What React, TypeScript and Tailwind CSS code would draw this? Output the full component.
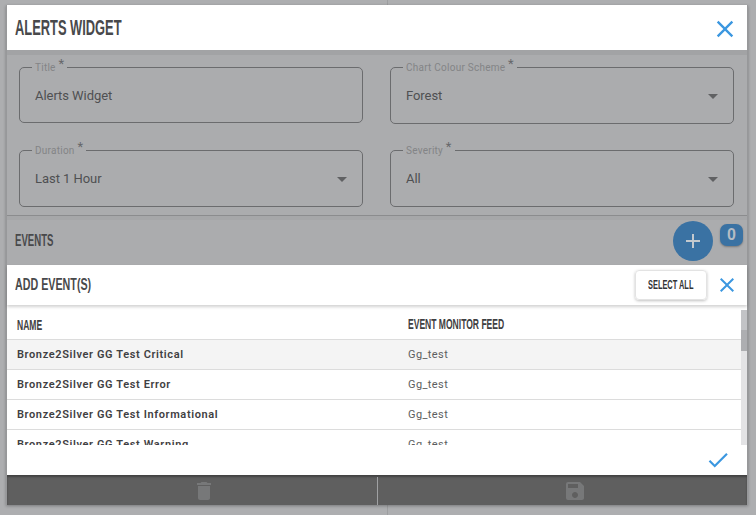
/**
 * Alerts widget dialog with the "add events" panel open
 */
import React from 'react';
import { MdArrowDropDown, MdClose, MdDelete, MdSave, MdCheck } from 'react-icons/md';

const EVENTS = [
    'Bronze2Silver GG Test Critical',
    'Bronze2Silver GG Test Error',
    'Bronze2Silver GG Test Informational',
    'Bronze2Silver GG Test Warning',
];

// no Oswald here, so squeeze a narrow face sideways
const Heading = ({ children, className }: { children: React.ReactNode; className: string }) => (
    <span className={`inline-block origin-left whitespace-nowrap font-['Liberation_Sans_Narrow','Liberation_Sans',sans-serif] ${className}`}>
        {children}
    </span>
);

const Field = ({ label, value, select, className }: { label: string; value: string; select?: boolean; className: string }) => (
    <fieldset className={`rounded-[5px] border border-[#6b6c6e] pl-[15px] pr-[8px] ${className}`}>
        <legend className="ml-[-3px] h-[12px] px-[3px] text-[10px] leading-[14px] tracking-[0.25px] text-[#838486]">
            {label} <span className="relative top-[-3px] text-[13px] leading-[12px] text-[#66676a]">*</span>
        </legend>
        <div className="mt-[13px] flex h-[20px] items-center justify-between text-[13px] leading-[20px] tracking-[-0.05px] text-[#4f5052]">
            <span>{value}</span>
            {select && <MdArrowDropDown size={24} className="text-[#606163]" />}
        </div>
    </fieldset>
);

export default function App() {
    return (
        <div className="relative h-[515px] w-[756px] overflow-hidden bg-[#adaeb0] font-['Roboto',sans-serif]">
            {/* page behind the dialog */}
            <div className="h-full w-[388px] border-r border-[#9d9ea0]" />

            <div className="absolute left-[6px] top-[5px] flex h-[500px] w-[742px] flex-col border-x border-[#97989a] shadow-[0_1px_3px_rgba(0,0,0,0.3)]">
                <div className="flex h-[45px] shrink-0 items-center justify-between bg-white pl-[8px] pr-[8px]">
                    <Heading className="scale-x-[0.585] text-[22px] font-bold text-[#48494b]">ALERTS WIDGET</Heading>
                    <MdClose size={28} className="mt-[2px] text-[#3b97e0]" />
                </div>

                <div className="h-[166px] shrink-0 border-b border-[#8b8c8e] bg-[#abacae] shadow-[inset_0_5px_0_#a2a3a5]">
                    <div className="grid grid-cols-[344px_344px] gap-x-[27px] gap-y-[20px] pl-[12px] pt-[11px]">
                        <Field label="Title" value="Alerts Widget" className="h-[62px]" />
                        <Field label="Chart Colour Scheme" value="Forest" select className="h-[63px]" />
                        <Field label="Duration" value="Last 1 Hour" select className="h-[63px]" />
                        <Field label="Severity" value="All" select className="h-[63px]" />
                    </div>
                </div>

                <div className="flex h-[49px] shrink-0 items-center justify-between bg-[#abacae] pl-[8px] pr-[4px] shadow-[inset_0_4px_0_#a6a7a9]">
                    <Heading className="mt-[1px] scale-x-[0.6] text-[16px] font-bold text-[#48494b]">EVENTS</Heading>
                    <div className="flex items-start gap-[7px]">
                        <div className="flex h-[40px] w-[40px] items-center justify-center rounded-full bg-[#3a72a3]">
                            <svg width="16" height="16" viewBox="0 0 16 16" className="text-[#c3c9ce]">
                                <path d="M8 1v14M1 8h14" stroke="currentColor" strokeWidth="2" />
                            </svg>
                        </div>
                        <div className="mt-[3px] flex h-[22px] w-[23px] items-center justify-center rounded-[7px] bg-[#3a72a3] shadow-[0_1px_2px_rgba(0,0,0,0.3)]">
                            <span className="font-['Liberation_Sans_Narrow',sans-serif] text-[16px] font-bold text-[#b4bcc4]">0</span>
                        </div>
                    </div>
                </div>

                {/* add events panel */}
                <div className="z-10 flex h-[210px] shrink-0 flex-col bg-white">
                    <div className="flex h-[40px] shrink-0 items-center justify-between pl-[8px] pr-[8px] shadow-[0_2px_3px_rgba(0,0,0,0.18)]">
                        <Heading className="scale-x-[0.63] text-[17px] font-bold text-[#48494b]">ADD EVENT(S)</Heading>
                        <div className="flex items-center gap-[8px]">
                            <div className="flex h-[30px] w-[72px] items-center rounded-[4px] border border-[#e3e3e3] pl-[12px] shadow-[0_1px_3px_rgba(0,0,0,0.25)]">
                                <Heading className="scale-x-[0.57] text-[13px] font-bold text-[#333436]">SELECT ALL</Heading>
                            </div>
                            <MdClose size={24} className="text-[#3b97e0]" />
                        </div>
                    </div>

                    <div className="mt-[5px] flex h-[135px] shrink-0 overflow-hidden">
                        <div className="flex-1">
                            <div className="flex h-[30px] items-center border-b border-[#dcdcdc] pl-[10px]">
                                <div className="w-[391px]">
                                    <Heading className="scale-x-[0.61] text-[14px] font-bold text-[#3f4042]">NAME</Heading>
                                </div>
                                <Heading className="scale-x-[0.61] text-[14px] font-bold text-[#3f4042]">EVENT MONITOR FEED</Heading>
                            </div>
                            {EVENTS.map((name, i) => (
                                <div key={name} className={`flex h-[30px] items-center border-b border-[#dcdcdc] pl-[10px] pt-[1px] text-[11px] ${i === 0 ? 'bg-[#f4f4f4]' : ''}`}>
                                    <div className="w-[391px] font-semibold tracking-[0.62px] text-[#3f4042]">{name}</div>
                                    <div className="tracking-[0.4px] text-[#5d5e60]">Gg_test</div>
                                </div>
                            ))}
                        </div>
                        <div className="flex w-[6px] shrink-0 flex-col bg-[#e3e3e5]">
                            <div className="h-[20px] bg-[#c2c3c6]" />
                            <div className="h-[21px] bg-[#adaeb1]" />
                        </div>
                    </div>

                    <div className="flex h-[30px] shrink-0 items-center justify-end pr-[16px]">
                        <MdCheck size={26} className="text-[#3b97e0]" />
                    </div>
                </div>

                <div className="flex h-[30px] shrink-0 bg-[#5f5f5f] pt-[2px] shadow-[inset_0_2px_2px_rgba(0,0,0,0.3)]">
                    <div className="flex w-[371px] items-center justify-center border-r border-[#a0a1a3] pl-[24px]">
                        <MdDelete size={24} className="text-[#777879]" />
                    </div>
                    <div className="flex flex-1 items-center justify-center pl-[24px]">
                        <MdSave size={24} className="text-[#777879]" />
                    </div>
                </div>
            </div>
        </div>
    );
}
